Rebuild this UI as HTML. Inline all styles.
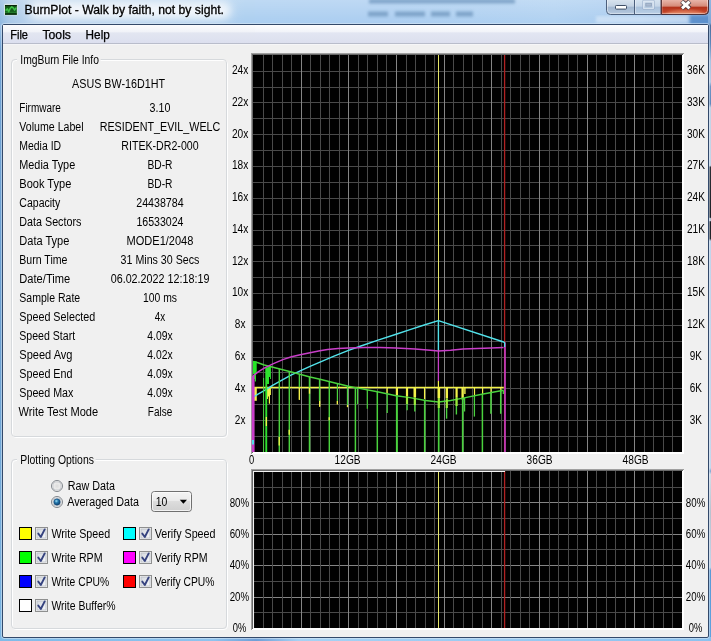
<!DOCTYPE html>
<html><head><meta charset="utf-8"><title>BurnPlot</title>
<style>html,body{margin:0;padding:0;background:#f0f0f0;overflow:hidden}body{width:711px;height:641px;font-family:"Liberation Sans",sans-serif}svg text{font-family:"Liberation Sans",sans-serif}</style></head>
<body>
<svg width="711" height="641" viewBox="0 0 711 641" font-family='"Liberation Sans", sans-serif' style="display:block;will-change:transform;opacity:0.999">
<defs>
<linearGradient id="tb" x1="0" y1="0" x2="1" y2="0">
 <stop offset="0" stop-color="#8fb8e0"/><stop offset="0.012" stop-color="#a6c6e6"/>
 <stop offset="0.04" stop-color="#b6d0ec"/><stop offset="0.30" stop-color="#b3d1ef"/>
 <stop offset="0.345" stop-color="#a9cdf0"/>
 <stop offset="0.55" stop-color="#a9ccf0"/><stop offset="0.78" stop-color="#aed0f1"/><stop offset="0.9" stop-color="#a6c9ee"/>
 <stop offset="1" stop-color="#8fb6e2"/>
</linearGradient>
<linearGradient id="tbv" x1="0" y1="0" x2="0" y2="1">
 <stop offset="0" stop-color="#ffffff" stop-opacity="0.25"/><stop offset="1" stop-color="#ffffff" stop-opacity="0"/>
</linearGradient>
<linearGradient id="menu" x1="0" y1="0" x2="0" y2="1">
 <stop offset="0" stop-color="#fdfdfe"/><stop offset="0.38" stop-color="#f1f3f9"/>
 <stop offset="0.42" stop-color="#e2e6f2"/><stop offset="1" stop-color="#dcdfee"/>
</linearGradient>
<linearGradient id="btnN" x1="0" y1="0" x2="0" y2="1">
 <stop offset="0" stop-color="#d8e3ee"/><stop offset="0.42" stop-color="#c3d2e3"/>
 <stop offset="0.46" stop-color="#a2b7d0"/><stop offset="1" stop-color="#b6c9df"/>
</linearGradient>
<linearGradient id="btnD" x1="0" y1="0" x2="0" y2="1">
 <stop offset="0" stop-color="#d6e3f0"/><stop offset="0.42" stop-color="#c6d6e8"/>
 <stop offset="0.46" stop-color="#aac1db"/><stop offset="1" stop-color="#b9cfe6"/>
</linearGradient>
<linearGradient id="btnC" x1="0" y1="0" x2="0" y2="1">
 <stop offset="0" stop-color="#e8b5a9"/><stop offset="0.42" stop-color="#d58a78"/>
 <stop offset="0.46" stop-color="#b2321b"/><stop offset="0.8" stop-color="#c24428"/><stop offset="1" stop-color="#d4694a"/>
</linearGradient>
<linearGradient id="combo" x1="0" y1="0" x2="0" y2="1">
 <stop offset="0" stop-color="#f4f4f4"/><stop offset="0.45" stop-color="#ebebeb"/>
 <stop offset="0.5" stop-color="#dddddd"/><stop offset="1" stop-color="#cfcfcf"/>
</linearGradient>
<linearGradient id="chk" x1="0" y1="0" x2="1" y2="1">
 <stop offset="0" stop-color="#d4d8de"/><stop offset="1" stop-color="#f7f8fa"/>
</linearGradient>
<radialGradient id="rad0" cx="0.5" cy="0.5" r="0.5">
 <stop offset="0" stop-color="#dcdcdc"/><stop offset="0.6" stop-color="#ececec"/><stop offset="1" stop-color="#f8f8f8"/>
</radialGradient>
<radialGradient id="rad1" cx="0.4" cy="0.35" r="0.7">
 <stop offset="0" stop-color="#9fe0f5"/><stop offset="0.4" stop-color="#2478ae"/><stop offset="1" stop-color="#0a3560"/>
</radialGradient>
<linearGradient id="rb" x1="0" y1="0" x2="0" y2="1">
 <stop offset="0" stop-color="#8fb6e2"/><stop offset="0.036" stop-color="#7fa9d8"/>
 <stop offset="0.04" stop-color="#4a6f9f"/><stop offset="0.068" stop-color="#5d88bb"/>
 <stop offset="0.095" stop-color="#a9c4e2"/><stop offset="0.128" stop-color="#b7cde6"/>
 <stop offset="0.135" stop-color="#6e96c6"/><stop offset="0.162" stop-color="#5f89bc"/>
 <stop offset="0.168" stop-color="#c3d3e6"/><stop offset="0.258" stop-color="#c6d4e6"/>
 <stop offset="0.261" stop-color="#2b2f36"/><stop offset="0.339" stop-color="#1d2026"/>
 <stop offset="0.341" stop-color="#b9c6d6"/><stop offset="0.344" stop-color="#b9c6d6"/>
 <stop offset="0.346" stop-color="#1d2026"/><stop offset="0.372" stop-color="#23262b"/>
 <stop offset="0.376" stop-color="#c2d4ea"/><stop offset="0.73" stop-color="#c7d8ec"/>
 <stop offset="0.735" stop-color="#7fa6d2"/><stop offset="0.74" stop-color="#d5dde8"/>
 <stop offset="0.80" stop-color="#b9c2cf"/><stop offset="0.885" stop-color="#c3d4e8"/>
 <stop offset="0.89" stop-color="#5a9ad6"/><stop offset="1" stop-color="#5fa3df"/>
</linearGradient>
<linearGradient id="lb" x1="0" y1="0" x2="0" y2="1">
 <stop offset="0" stop-color="#9dc0e4"/><stop offset="0.04" stop-color="#6fa2d4"/>
 <stop offset="0.5" stop-color="#6c9fd0"/><stop offset="1" stop-color="#79b4e2"/>
</linearGradient>
<linearGradient id="bb" x1="0" y1="0" x2="1" y2="0">
 <stop offset="0" stop-color="#7fbbe8"/><stop offset="0.3" stop-color="#8ec3ee"/>
 <stop offset="0.36" stop-color="#6f9fd6"/><stop offset="0.42" stop-color="#a6d2f4"/>
 <stop offset="1" stop-color="#8cc2ee"/>
</linearGradient>
<filter id="glow" x="-10%" y="-80%" width="120%" height="260%"><feGaussianBlur stdDeviation="4"/></filter>
<filter id="b1"><feGaussianBlur stdDeviation="1.6"/></filter>
<filter id="soft" x="-5%" y="-5%" width="110%" height="110%"><feGaussianBlur stdDeviation="0.35"/></filter>
</defs>
<rect x="0" y="0" width="711" height="641" fill="url(#tb)"/>
<rect x="0" y="0" width="711" height="25" fill="url(#tbv)"/>
<g filter="url(#b1)" fill="#7299c0" opacity="0.8"><rect x="369" y="-1" width="146" height="4.5"/><rect x="368" y="11.5" width="20" height="5"/><rect x="395" y="11.5" width="30" height="5"/><rect x="431" y="11.5" width="19" height="5"/><rect x="456" y="11.5" width="17" height="5"/></g>
<rect x="690" y="15" width="30" height="10" fill="#4f86c6" opacity="0.8" filter="url(#b1)"/>
<rect x="596" y="16" width="92" height="7" fill="#ffffff" opacity="0.35" filter="url(#b1)"/>
<rect x="29" y="2" width="202" height="17" rx="8" fill="#ffffff" opacity="0.8" filter="url(#glow)"/>
<rect x="0" y="25" width="3" height="616" fill="url(#lb)"/>
<rect x="708" y="0" width="3" height="641" fill="url(#rb)"/>
<rect x="0" y="637" width="711" height="4" fill="url(#bb)"/>
<rect x="2.5" y="24.5" width="706" height="613" rx="1.5" fill="#f0f0f0" stroke="#33496a" stroke-width="1"/>
<rect x="1.5" y="23.5" width="708" height="615" rx="2.5" fill="none" stroke="#dbe9f6" stroke-opacity="0.55" stroke-width="1"/>
<rect x="4" y="3.8" width="13.8" height="11.8" rx="0.8" fill="#d3e4e4" />
<rect x="5" y="5" width="11.8" height="9.7" fill="#155c1b"/>
<rect x="5" y="5" width="11.8" height="1.2" fill="#072408"/><rect x="5" y="13.4" width="11.8" height="1.3" fill="#072408"/>
<line x1="5" y1="12.3" x2="16.8" y2="12.3" stroke="#2f8f36" stroke-width="0.7"/>
<polyline points="5.6,10.6 7.4,8.9 8.6,11.8 10.4,8.2 11.8,6.9 13.4,8.1 14.6,10.2 16.2,7.6" fill="none" stroke="#3dc146" stroke-width="1.5" stroke-linejoin="round"/>
<text x="24.6" y="13.8" font-size="11.9" fill="#000" textLength="199.4" lengthAdjust="spacingAndGlyphs" stroke="#000" stroke-width="0.3">BurnPlot - Walk by faith, not by sight.</text>
<g>
<path d="M606.5,0 V10.5 a4,4 0 0 0 4,4 H704.5 a4,4 0 0 0 4,-4 V0 Z" fill="#b4c9e0"/>
<clipPath id="cb"><path d="M606.5,0 V10.5 a4,4 0 0 0 4,4 H704.5 a4,4 0 0 0 4,-4 V0 Z"/></clipPath>
<g clip-path="url(#cb)">
<rect x="606" y="0" width="28.5" height="15" fill="url(#btnN)"/>
<rect x="634.5" y="0" width="26.5" height="15" fill="url(#btnD)"/>
<rect x="661" y="0" width="48" height="15" fill="url(#btnC)"/>
<ellipse cx="685" cy="14.5" rx="19" ry="4.5" fill="#f2a27c" opacity="0.55" filter="url(#b1)"/>
</g>
<path d="M606.5,0 V10.5 a4,4 0 0 0 4,4 H704.5 a4,4 0 0 0 4,-4 V0" fill="none" stroke="#4c5f7c" stroke-width="1"/>
<path d="M607.5,0 V10.2 a3.2,3.2 0 0 0 3.2,3.2 H704.3 a3.2,3.2 0 0 0 3.2,-3.2 V0" fill="none" stroke="#ffffff" stroke-opacity="0.45" stroke-width="1"/>
<line x1="634.5" y1="0" x2="634.5" y2="14" stroke="#4c5f7c"/><line x1="661" y1="0" x2="661" y2="14" stroke="#5c4a56"/>
<line x1="635.5" y1="0" x2="635.5" y2="13" stroke="#fff" stroke-opacity="0.4"/><line x1="662" y1="0" x2="662" y2="13" stroke="#fff" stroke-opacity="0.35"/>
<rect x="615.5" y="5.5" width="11" height="3.6" rx="0.8" fill="#ffffff" stroke="#3f4f66" stroke-width="1"/>
<rect x="643.5" y="1" width="10" height="7.5" rx="0.8" fill="none" stroke="#dfe9f4" stroke-width="1.6" opacity="0.9"/>
<rect x="645.8" y="3.3" width="5.6" height="2.8" fill="#a9b9cf" stroke="#8fa2bc" stroke-width="0.9" opacity="0.95"/>
<rect x="642.6" y="0.2" width="11.8" height="9.2" rx="1" fill="none" stroke="#8fa6c3" stroke-width="0.7" opacity="0.8"/>
<path d="M661.5,0 V14 M661.5,14.5 H704.5 a4,4 0 0 0 4,-4 V0" fill="none" stroke="#4a2428" stroke-width="1" stroke-opacity="0.8"/>
<path d="M681.7,1.3 L689.8,8.6 M689.8,1.3 L681.7,8.6" fill="none" stroke="#45373f" stroke-width="4.7" stroke-opacity="0.9"/>
<path d="M682,1.6 L689.5,8.3 M689.5,1.6 L682,8.3" fill="none" stroke="#ffffff" stroke-width="2.9"/>
</g>
<rect x="3" y="25" width="705" height="18.5" fill="url(#menu)"/>
<rect x="3" y="43" width="705" height="1" fill="#b9bdcb"/>
<rect x="3" y="44" width="705" height="1" fill="#f6f6f8"/>
<text x="10.2" y="38.6" font-size="11.9" fill="#000" textLength="17.8" lengthAdjust="spacingAndGlyphs" stroke="#000" stroke-width="0.25">File</text>
<text x="42.4" y="38.6" font-size="11.9" fill="#000" textLength="28.6" lengthAdjust="spacingAndGlyphs" stroke="#000" stroke-width="0.25">Tools</text>
<text x="85.6" y="38.6" font-size="11.9" fill="#000" textLength="24.2" lengthAdjust="spacingAndGlyphs" stroke="#000" stroke-width="0.25">Help</text>
<rect x="12.5" y="60.5" width="215" height="377" rx="3.5" fill="none" stroke="#ffffff" stroke-width="1"/>
<rect x="11.5" y="59.5" width="215" height="377" rx="3.5" fill="none" stroke="#d6d9dc" stroke-width="1"/>
<rect x="17" y="52" width="83.6" height="14" fill="#f0f0f0"/>
<text x="20.3" y="63.9" font-size="12.5" fill="#000" textLength="78.6" lengthAdjust="spacingAndGlyphs">ImgBurn File Info</text>
<rect x="12.5" y="460.5" width="215" height="169" rx="3.5" fill="none" stroke="#ffffff" stroke-width="1"/>
<rect x="11.5" y="459.5" width="215" height="169" rx="3.5" fill="none" stroke="#d6d9dc" stroke-width="1"/>
<rect x="17" y="452" width="78.6" height="14" fill="#f0f0f0"/>
<text x="20.3" y="463.9" font-size="12.5" fill="#000" textLength="73.6" lengthAdjust="spacingAndGlyphs">Plotting Options</text>
<text x="72.1" y="87.6" font-size="12.5" fill="#000" textLength="92.9" lengthAdjust="spacingAndGlyphs">ASUS BW-16D1HT</text>
<text x="19.3" y="112.0" font-size="12.5" fill="#000" textLength="41.5" lengthAdjust="spacingAndGlyphs">Firmware</text>
<text x="149.6" y="112.0" font-size="12.5" fill="#000" textLength="20.8" lengthAdjust="spacingAndGlyphs">3.10</text>
<text x="19.3" y="131.0" font-size="12.5" fill="#000" textLength="64.3" lengthAdjust="spacingAndGlyphs">Volume Label</text>
<text x="99.7" y="131.0" font-size="12.5" fill="#000" textLength="120.6" lengthAdjust="spacingAndGlyphs">RESIDENT_EVIL_WELC</text>
<text x="19.3" y="150.0" font-size="12.5" fill="#000" textLength="41.8" lengthAdjust="spacingAndGlyphs">Media ID</text>
<text x="121.3" y="150.0" font-size="12.5" fill="#000" textLength="77.3" lengthAdjust="spacingAndGlyphs">RITEK-DR2-000</text>
<text x="19.3" y="169.0" font-size="12.5" fill="#000" textLength="55.9" lengthAdjust="spacingAndGlyphs">Media Type</text>
<text x="147.4" y="169.0" font-size="12.5" fill="#000" textLength="25.1" lengthAdjust="spacingAndGlyphs">BD-R</text>
<text x="19.3" y="188.0" font-size="12.5" fill="#000" textLength="52.0" lengthAdjust="spacingAndGlyphs">Book Type</text>
<text x="147.4" y="188.0" font-size="12.5" fill="#000" textLength="25.1" lengthAdjust="spacingAndGlyphs">BD-R</text>
<text x="19.3" y="207.0" font-size="12.5" fill="#000" textLength="41.0" lengthAdjust="spacingAndGlyphs">Capacity</text>
<text x="136.2" y="207.0" font-size="12.5" fill="#000" textLength="47.5" lengthAdjust="spacingAndGlyphs">24438784</text>
<text x="19.3" y="226.0" font-size="12.5" fill="#000" textLength="62.1" lengthAdjust="spacingAndGlyphs">Data Sectors</text>
<text x="136.4" y="226.0" font-size="12.5" fill="#000" textLength="47.1" lengthAdjust="spacingAndGlyphs">16533024</text>
<text x="19.3" y="245.0" font-size="12.5" fill="#000" textLength="50.1" lengthAdjust="spacingAndGlyphs">Data Type</text>
<text x="126.5" y="245.0" font-size="12.5" fill="#000" textLength="66.9" lengthAdjust="spacingAndGlyphs">MODE1/2048</text>
<text x="19.3" y="264.0" font-size="12.5" fill="#000" textLength="48.1" lengthAdjust="spacingAndGlyphs">Burn Time</text>
<text x="120.6" y="264.0" font-size="12.5" fill="#000" textLength="78.8" lengthAdjust="spacingAndGlyphs">31 Mins 30 Secs</text>
<text x="19.3" y="283.0" font-size="12.5" fill="#000" textLength="50.9" lengthAdjust="spacingAndGlyphs">Date/Time</text>
<text x="110.7" y="283.0" font-size="12.5" fill="#000" textLength="98.7" lengthAdjust="spacingAndGlyphs">06.02.2022 12:18:19</text>
<text x="19.3" y="302.0" font-size="12.5" fill="#000" textLength="60.9" lengthAdjust="spacingAndGlyphs">Sample Rate</text>
<text x="143.0" y="302.0" font-size="12.5" fill="#000" textLength="34.0" lengthAdjust="spacingAndGlyphs">100 ms</text>
<text x="19.3" y="321.0" font-size="12.5" fill="#000" textLength="75.9" lengthAdjust="spacingAndGlyphs">Speed Selected</text>
<text x="154.8" y="321.0" font-size="12.5" fill="#000" textLength="10.4" lengthAdjust="spacingAndGlyphs">4x</text>
<text x="19.3" y="340.0" font-size="12.5" fill="#000" textLength="55.8" lengthAdjust="spacingAndGlyphs">Speed Start</text>
<text x="147.3" y="340.0" font-size="12.5" fill="#000" textLength="25.3" lengthAdjust="spacingAndGlyphs">4.09x</text>
<text x="19.3" y="359.0" font-size="12.5" fill="#000" textLength="53.2" lengthAdjust="spacingAndGlyphs">Speed Avg</text>
<text x="147.3" y="359.0" font-size="12.5" fill="#000" textLength="25.3" lengthAdjust="spacingAndGlyphs">4.02x</text>
<text x="19.3" y="378.0" font-size="12.5" fill="#000" textLength="53.2" lengthAdjust="spacingAndGlyphs">Speed End</text>
<text x="147.3" y="378.0" font-size="12.5" fill="#000" textLength="25.3" lengthAdjust="spacingAndGlyphs">4.09x</text>
<text x="19.3" y="397.0" font-size="12.5" fill="#000" textLength="54.1" lengthAdjust="spacingAndGlyphs">Speed Max</text>
<text x="147.3" y="397.0" font-size="12.5" fill="#000" textLength="25.3" lengthAdjust="spacingAndGlyphs">4.09x</text>
<text x="18.6" y="416.0" font-size="12.5" fill="#000" textLength="79.5" lengthAdjust="spacingAndGlyphs">Write Test Mode</text>
<text x="147.8" y="416.0" font-size="12.5" fill="#000" textLength="24.4" lengthAdjust="spacingAndGlyphs">False</text>
<circle cx="57" cy="486" r="5.5" fill="url(#rad0)" stroke="#80858b" stroke-width="1"/>
<circle cx="57" cy="486" r="4.1" fill="none" stroke="#c6c9cd" stroke-width="1"/>
<circle cx="57" cy="502" r="5.5" fill="url(#rad0)" stroke="#80858b" stroke-width="1"/>
<circle cx="57" cy="502" r="4.1" fill="none" stroke="#c6c9cd" stroke-width="1"/>
<circle cx="57" cy="502" r="3.2" fill="url(#rad1)" stroke="#1b4f7d" stroke-width="0.6"/>
<text x="67.7" y="489.8" font-size="12.5" fill="#000" textLength="47.3" lengthAdjust="spacingAndGlyphs">Raw Data</text>
<text x="67.2" y="505.8" font-size="12.5" fill="#000" textLength="71.8" lengthAdjust="spacingAndGlyphs">Averaged Data</text>
<rect x="151.5" y="491.5" width="40" height="20" rx="3" fill="url(#combo)" stroke="#707070"/>
<rect x="152.5" y="492.5" width="38" height="18" rx="2" fill="none" stroke="#fbfbfb" stroke-opacity="0.8"/>
<text x="155.8" y="505.5" font-size="12.5" fill="#000" textLength="11.6" lengthAdjust="spacingAndGlyphs">10</text>
<path d="M179.8,499.8 h7.2 l-3.6,4 z" fill="#000"/>
<rect x="19.5" y="527.5" width="12" height="12" fill="#ffff00" stroke="#000" stroke-width="1"/>
<rect x="35.5" y="527.5" width="12" height="12" fill="#f4f4f4" stroke="#8e8f8f" stroke-width="1"/>
<rect x="37" y="529" width="9" height="9" fill="url(#chk)" stroke="#b9bec6" stroke-width="0.8"/>
<path d="M38.3,533.6 l2.5,3.4 l3.9,-7.6" fill="none" stroke="#36437f" stroke-width="1.9" stroke-linecap="round" stroke-linejoin="round"/>
<text x="51.4" y="537.7" font-size="12.5" fill="#000" textLength="58.7" lengthAdjust="spacingAndGlyphs">Write Speed</text>
<rect x="19.5" y="551.5" width="12" height="12" fill="#00ff00" stroke="#000" stroke-width="1"/>
<rect x="35.5" y="551.5" width="12" height="12" fill="#f4f4f4" stroke="#8e8f8f" stroke-width="1"/>
<rect x="37" y="553" width="9" height="9" fill="url(#chk)" stroke="#b9bec6" stroke-width="0.8"/>
<path d="M38.3,557.6 l2.5,3.4 l3.9,-7.6" fill="none" stroke="#36437f" stroke-width="1.9" stroke-linecap="round" stroke-linejoin="round"/>
<text x="51.4" y="561.7" font-size="12.5" fill="#000" textLength="51.1" lengthAdjust="spacingAndGlyphs">Write RPM</text>
<rect x="19.5" y="575.5" width="12" height="12" fill="#0000ff" stroke="#000" stroke-width="1"/>
<rect x="35.5" y="575.5" width="12" height="12" fill="#f4f4f4" stroke="#8e8f8f" stroke-width="1"/>
<rect x="37" y="577" width="9" height="9" fill="url(#chk)" stroke="#b9bec6" stroke-width="0.8"/>
<path d="M38.3,581.6 l2.5,3.4 l3.9,-7.6" fill="none" stroke="#36437f" stroke-width="1.9" stroke-linecap="round" stroke-linejoin="round"/>
<text x="51.4" y="585.7" font-size="12.5" fill="#000" textLength="57.8" lengthAdjust="spacingAndGlyphs">Write CPU%</text>
<rect x="19.5" y="599.5" width="12" height="12" fill="#ffffff" stroke="#000" stroke-width="1"/>
<rect x="35.5" y="599.5" width="12" height="12" fill="#f4f4f4" stroke="#8e8f8f" stroke-width="1"/>
<rect x="37" y="601" width="9" height="9" fill="url(#chk)" stroke="#b9bec6" stroke-width="0.8"/>
<path d="M38.3,605.6 l2.5,3.4 l3.9,-7.6" fill="none" stroke="#36437f" stroke-width="1.9" stroke-linecap="round" stroke-linejoin="round"/>
<text x="51.4" y="609.7" font-size="12.5" fill="#000" textLength="64.1" lengthAdjust="spacingAndGlyphs">Write Buffer%</text>
<rect x="123.5" y="527.5" width="12" height="12" fill="#00ffff" stroke="#000" stroke-width="1"/>
<rect x="139.5" y="527.5" width="12" height="12" fill="#f4f4f4" stroke="#8e8f8f" stroke-width="1"/>
<rect x="141" y="529" width="9" height="9" fill="url(#chk)" stroke="#b9bec6" stroke-width="0.8"/>
<path d="M142.3,533.6 l2.5,3.4 l3.9,-7.6" fill="none" stroke="#36437f" stroke-width="1.9" stroke-linecap="round" stroke-linejoin="round"/>
<text x="154.7" y="537.7" font-size="12.5" fill="#000" textLength="60.8" lengthAdjust="spacingAndGlyphs">Verify Speed</text>
<rect x="123.5" y="551.5" width="12" height="12" fill="#ff00ff" stroke="#000" stroke-width="1"/>
<rect x="139.5" y="551.5" width="12" height="12" fill="#f4f4f4" stroke="#8e8f8f" stroke-width="1"/>
<rect x="141" y="553" width="9" height="9" fill="url(#chk)" stroke="#b9bec6" stroke-width="0.8"/>
<path d="M142.3,557.6 l2.5,3.4 l3.9,-7.6" fill="none" stroke="#36437f" stroke-width="1.9" stroke-linecap="round" stroke-linejoin="round"/>
<text x="154.7" y="561.7" font-size="12.5" fill="#000" textLength="52.9" lengthAdjust="spacingAndGlyphs">Verify RPM</text>
<rect x="123.5" y="575.5" width="12" height="12" fill="#ff0000" stroke="#000" stroke-width="1"/>
<rect x="139.5" y="575.5" width="12" height="12" fill="#f4f4f4" stroke="#8e8f8f" stroke-width="1"/>
<rect x="141" y="577" width="9" height="9" fill="url(#chk)" stroke="#b9bec6" stroke-width="0.8"/>
<path d="M142.3,581.6 l2.5,3.4 l3.9,-7.6" fill="none" stroke="#36437f" stroke-width="1.9" stroke-linecap="round" stroke-linejoin="round"/>
<text x="154.7" y="585.7" font-size="12.5" fill="#000" textLength="59.8" lengthAdjust="spacingAndGlyphs">Verify CPU%</text>
<rect x="251" y="53" width="433" height="401" fill="#ffffff"/>
<path d="M251,454 V53 H684 V54 H252 V454 Z" fill="#a0a0a0"/>
<path d="M252,453 V54 H683 V55 H253 V453 Z" fill="#696969"/>
<rect x="253" y="55" width="429" height="397" fill="#000"/>
<rect x="251" y="469" width="433" height="161" fill="#ffffff"/>
<path d="M251,630 V469 H684 V470 H252 V630 Z" fill="#a0a0a0"/>
<path d="M252,629 V470 H683 V471 H253 V629 Z" fill="#696969"/>
<rect x="253" y="471" width="429" height="157" fill="#000"/>
<clipPath id="ct"><rect x="253" y="55" width="429" height="397"/></clipPath>
<clipPath id="cbm"><rect x="253" y="471" width="429" height="157"/></clipPath>
<g clip-path="url(#ct)">
<line x1="253" y1="436.50" x2="682" y2="436.50" stroke="#4a4a4a" stroke-width="1"/>
<line x1="253" y1="420.50" x2="682" y2="420.50" stroke="#4a4a4a" stroke-width="1"/>
<line x1="253" y1="404.50" x2="682" y2="404.50" stroke="#4a4a4a" stroke-width="1"/>
<line x1="253" y1="388.50" x2="682" y2="388.50" stroke="#4a4a4a" stroke-width="1"/>
<line x1="253" y1="372.50" x2="682" y2="372.50" stroke="#4a4a4a" stroke-width="1"/>
<line x1="253" y1="357.50" x2="682" y2="357.50" stroke="#4a4a4a" stroke-width="1"/>
<line x1="253" y1="341.50" x2="682" y2="341.50" stroke="#4a4a4a" stroke-width="1"/>
<line x1="253" y1="325.50" x2="682" y2="325.50" stroke="#4a4a4a" stroke-width="1"/>
<line x1="253" y1="309.50" x2="682" y2="309.50" stroke="#4a4a4a" stroke-width="1"/>
<line x1="253" y1="293.50" x2="682" y2="293.50" stroke="#4a4a4a" stroke-width="1"/>
<line x1="253" y1="277.50" x2="682" y2="277.50" stroke="#4a4a4a" stroke-width="1"/>
<line x1="253" y1="261.50" x2="682" y2="261.50" stroke="#4a4a4a" stroke-width="1"/>
<line x1="253" y1="245.50" x2="682" y2="245.50" stroke="#4a4a4a" stroke-width="1"/>
<line x1="253" y1="230.50" x2="682" y2="230.50" stroke="#4a4a4a" stroke-width="1"/>
<line x1="253" y1="214.50" x2="682" y2="214.50" stroke="#4a4a4a" stroke-width="1"/>
<line x1="253" y1="198.50" x2="682" y2="198.50" stroke="#4a4a4a" stroke-width="1"/>
<line x1="253" y1="182.50" x2="682" y2="182.50" stroke="#4a4a4a" stroke-width="1"/>
<line x1="253" y1="166.50" x2="682" y2="166.50" stroke="#4a4a4a" stroke-width="1"/>
<line x1="253" y1="150.50" x2="682" y2="150.50" stroke="#4a4a4a" stroke-width="1"/>
<line x1="253" y1="134.50" x2="682" y2="134.50" stroke="#4a4a4a" stroke-width="1"/>
<line x1="253" y1="118.50" x2="682" y2="118.50" stroke="#4a4a4a" stroke-width="1"/>
<line x1="253" y1="102.50" x2="682" y2="102.50" stroke="#4a4a4a" stroke-width="1"/>
<line x1="253" y1="87.50" x2="682" y2="87.50" stroke="#4a4a4a" stroke-width="1"/>
<line x1="253" y1="71.50" x2="682" y2="71.50" stroke="#4a4a4a" stroke-width="1"/>
<line x1="263.50" y1="55" x2="263.50" y2="452" stroke="#4a4a4a" stroke-width="1"/>
<line x1="272.50" y1="55" x2="272.50" y2="452" stroke="#4a4a4a" stroke-width="1"/>
<line x1="282.50" y1="55" x2="282.50" y2="452" stroke="#4a4a4a" stroke-width="1"/>
<line x1="291.50" y1="55" x2="291.50" y2="452" stroke="#4a4a4a" stroke-width="1"/>
<line x1="301.50" y1="55" x2="301.50" y2="452" stroke="#858585" stroke-width="1"/>
<line x1="310.50" y1="55" x2="310.50" y2="452" stroke="#4a4a4a" stroke-width="1"/>
<line x1="320.50" y1="55" x2="320.50" y2="452" stroke="#4a4a4a" stroke-width="1"/>
<line x1="329.50" y1="55" x2="329.50" y2="452" stroke="#4a4a4a" stroke-width="1"/>
<line x1="339.50" y1="55" x2="339.50" y2="452" stroke="#4a4a4a" stroke-width="1"/>
<line x1="348.50" y1="55" x2="348.50" y2="452" stroke="#858585" stroke-width="1"/>
<line x1="358.50" y1="55" x2="358.50" y2="452" stroke="#4a4a4a" stroke-width="1"/>
<line x1="367.50" y1="55" x2="367.50" y2="452" stroke="#4a4a4a" stroke-width="1"/>
<line x1="377.50" y1="55" x2="377.50" y2="452" stroke="#4a4a4a" stroke-width="1"/>
<line x1="386.50" y1="55" x2="386.50" y2="452" stroke="#4a4a4a" stroke-width="1"/>
<line x1="396.50" y1="55" x2="396.50" y2="452" stroke="#858585" stroke-width="1"/>
<line x1="406.50" y1="55" x2="406.50" y2="452" stroke="#4a4a4a" stroke-width="1"/>
<line x1="415.50" y1="55" x2="415.50" y2="452" stroke="#4a4a4a" stroke-width="1"/>
<line x1="425.50" y1="55" x2="425.50" y2="452" stroke="#4a4a4a" stroke-width="1"/>
<line x1="434.50" y1="55" x2="434.50" y2="452" stroke="#4a4a4a" stroke-width="1"/>
<line x1="444.50" y1="55" x2="444.50" y2="452" stroke="#858585" stroke-width="1"/>
<line x1="453.50" y1="55" x2="453.50" y2="452" stroke="#4a4a4a" stroke-width="1"/>
<line x1="463.50" y1="55" x2="463.50" y2="452" stroke="#4a4a4a" stroke-width="1"/>
<line x1="472.50" y1="55" x2="472.50" y2="452" stroke="#4a4a4a" stroke-width="1"/>
<line x1="482.50" y1="55" x2="482.50" y2="452" stroke="#4a4a4a" stroke-width="1"/>
<line x1="491.50" y1="55" x2="491.50" y2="452" stroke="#858585" stroke-width="1"/>
<line x1="501.50" y1="55" x2="501.50" y2="452" stroke="#4a4a4a" stroke-width="1"/>
<line x1="510.50" y1="55" x2="510.50" y2="452" stroke="#4a4a4a" stroke-width="1"/>
<line x1="520.50" y1="55" x2="520.50" y2="452" stroke="#4a4a4a" stroke-width="1"/>
<line x1="529.50" y1="55" x2="529.50" y2="452" stroke="#4a4a4a" stroke-width="1"/>
<line x1="539.50" y1="55" x2="539.50" y2="452" stroke="#858585" stroke-width="1"/>
<line x1="549.50" y1="55" x2="549.50" y2="452" stroke="#4a4a4a" stroke-width="1"/>
<line x1="558.50" y1="55" x2="558.50" y2="452" stroke="#4a4a4a" stroke-width="1"/>
<line x1="568.50" y1="55" x2="568.50" y2="452" stroke="#4a4a4a" stroke-width="1"/>
<line x1="577.50" y1="55" x2="577.50" y2="452" stroke="#4a4a4a" stroke-width="1"/>
<line x1="587.50" y1="55" x2="587.50" y2="452" stroke="#858585" stroke-width="1"/>
<line x1="596.50" y1="55" x2="596.50" y2="452" stroke="#4a4a4a" stroke-width="1"/>
<line x1="606.50" y1="55" x2="606.50" y2="452" stroke="#4a4a4a" stroke-width="1"/>
<line x1="615.50" y1="55" x2="615.50" y2="452" stroke="#4a4a4a" stroke-width="1"/>
<line x1="625.50" y1="55" x2="625.50" y2="452" stroke="#4a4a4a" stroke-width="1"/>
<line x1="634.50" y1="55" x2="634.50" y2="452" stroke="#858585" stroke-width="1"/>
<line x1="644.50" y1="55" x2="644.50" y2="452" stroke="#4a4a4a" stroke-width="1"/>
<line x1="653.50" y1="55" x2="653.50" y2="452" stroke="#4a4a4a" stroke-width="1"/>
<line x1="663.50" y1="55" x2="663.50" y2="452" stroke="#4a4a4a" stroke-width="1"/>
<line x1="672.50" y1="55" x2="672.50" y2="452" stroke="#4a4a4a" stroke-width="1"/>
<line x1="438.5" y1="55" x2="438.5" y2="452" stroke="#e6e668" stroke-width="1"/>
<line x1="504.6" y1="55" x2="504.6" y2="452" stroke="#b02222" stroke-width="1.3"/>
<g stroke="#f2f24a" fill="#f2f24a">
<line x1="254" y1="387.5" x2="503.8" y2="387.5" stroke-width="1.45"/>
<path d="M253.8,387.5 V400.8 H256.8 V387.5 Z" stroke="none"/>
<path d="M266.2,387.5 V399 H268 V396.5 H269 V403.6 H270 V395 H270.9 V387.5 Z" stroke="none"/>
<line x1="299.4" y1="387.5" x2="299.4" y2="399.7" stroke-width="1.2"/>
<line x1="309.5" y1="387.5" x2="309.5" y2="393.7" stroke-width="1.2"/>
<line x1="319.7" y1="387.5" x2="319.7" y2="406.6" stroke-width="1.2"/>
<line x1="266.4" y1="417" x2="266.4" y2="426" stroke-width="1.2"/>
<line x1="289.3" y1="429.8" x2="289.3" y2="434.7" stroke-width="1.2"/>
<line x1="279.3" y1="436.9" x2="279.3" y2="445.6" stroke-width="1.2"/>
<line x1="329.3" y1="417.3" x2="329.3" y2="420.3" stroke-width="1.2"/>
<line x1="337.4" y1="401" x2="337.4" y2="404.2" stroke-width="1.2"/>
<line x1="347.5" y1="405" x2="347.5" y2="407" stroke-width="1.2"/>
<line x1="387.1" y1="387.5" x2="387.1" y2="393.3" stroke-width="1.4"/>
<line x1="396.9" y1="387.5" x2="396.9" y2="395.7" stroke-width="2.2"/>
<line x1="407" y1="387.5" x2="407" y2="396.4" stroke-width="2.2"/>
<line x1="414.8" y1="387.5" x2="414.8" y2="397.2" stroke-width="2.6"/>
<line x1="424.6" y1="387.5" x2="424.6" y2="399.2" stroke-width="1.3"/>
<line x1="438.8" y1="387.5" x2="438.8" y2="398" stroke-width="2.6"/>
<line x1="446.8" y1="387.5" x2="446.8" y2="398.3" stroke-width="2.4"/>
<line x1="456.6" y1="387.5" x2="456.6" y2="397" stroke-width="2.2"/>
<line x1="462.6" y1="387.5" x2="462.6" y2="399.5" stroke-width="2.3"/>
<line x1="464.9" y1="387.5" x2="464.9" y2="394" stroke-width="1.4"/>
<line x1="474.5" y1="387.5" x2="474.5" y2="395.5" stroke-width="1.2"/>
<line x1="482.6" y1="387.5" x2="482.6" y2="394" stroke-width="1.2"/>
<line x1="491" y1="387.5" x2="491" y2="393.4" stroke-width="1.2"/>
<line x1="500.8" y1="387.5" x2="500.8" y2="391.3" stroke-width="1.2"/>
<line x1="438.4" y1="381" x2="438.4" y2="388" stroke-width="1.2"/>
</g>
<polyline points="253.3,397.2 258,394.2 264.2,390.6 273,385.1 282.8,379.7 291.5,374.9 300.2,370.8 310,366.4 320,362.2 334,356.2 348.5,350.4 360.2,346.3 378,340.1 396.1,334.2 410,329.6 425,324.8 438.4,320.6 504.4,342.2" fill="none" stroke="#52e2ea" stroke-width="1.45" stroke-linejoin="round"/>
<line x1="438.4" y1="320.6" x2="438.4" y2="350.5" stroke="#52e2ea" stroke-width="1.4"/>
<g stroke="#4ad23e" fill="#4ad23e">
<polyline points="252.7,361.5 258,362.8 264.2,365 273,367.2 291.5,372 310,377 320,379.3 334,382.8 348.5,386.3 355.5,387.6 377.4,391.8 396.1,395.7 410,397.6 425.6,400.5 438.4,402 450.6,400.5 463,398.1 481.8,394.2 503.6,390.3" fill="none" stroke-width="1.45" stroke-linejoin="round"/>
<path d="M252.9,361.2 H256.7 V374 H256 V381.5 H254.8 V379 H254 V374 H252.9 Z" stroke="none" fill="#25e425"/>
<path d="M265.3,367.8 L270.9,366.6 V379 H270 V377 H269 V384 H267.2 V452 H265.3 Z" stroke="none" fill="#2fe02f"/>
<line x1="263.6" y1="378.0" x2="263.6" y2="452" stroke-width="1.0"/>
<line x1="279.3" y1="368.8" x2="279.3" y2="452" stroke-width="1.4"/>
<line x1="289.3" y1="371.4" x2="289.3" y2="452" stroke-width="1.4"/>
<line x1="299.4" y1="374.1" x2="299.4" y2="387.5" stroke-width="1.4"/>
<line x1="309.5" y1="376.9" x2="309.5" y2="452" stroke-width="1.5"/>
<line x1="319.5" y1="379.2" x2="319.5" y2="401.1" stroke-width="1.3"/>
<line x1="329.3" y1="381.6" x2="329.3" y2="452" stroke-width="1.4"/>
<line x1="337.4" y1="383.6" x2="337.4" y2="401" stroke-width="1.2"/>
<line x1="347.5" y1="386.1" x2="347.5" y2="405.2" stroke-width="1.3"/>
<line x1="355.4" y1="387.6" x2="355.4" y2="452" stroke-width="1.5"/>
<line x1="357.5" y1="388.0" x2="357.5" y2="404" stroke-width="1.1"/>
<line x1="367.3" y1="389.9" x2="367.3" y2="408.8" stroke-width="1.2"/>
<line x1="377.3" y1="391.8" x2="377.3" y2="452" stroke-width="1.5"/>
<line x1="387.2" y1="393.8" x2="387.2" y2="413" stroke-width="1.3"/>
<line x1="396.9" y1="395.8" x2="396.9" y2="452" stroke-width="2.0"/>
<line x1="407.1" y1="397.2" x2="407.1" y2="410.2" stroke-width="1.4"/>
<line x1="414.8" y1="398.5" x2="414.8" y2="411.6" stroke-width="1.4"/>
<line x1="424.7" y1="400.3" x2="424.7" y2="452" stroke-width="1.6"/>
<line x1="438.7" y1="402.0" x2="438.7" y2="452" stroke-width="1.7"/>
<line x1="446.6" y1="401.0" x2="446.6" y2="418.7" stroke-width="1.4"/>
<line x1="456.4" y1="399.4" x2="456.4" y2="414.5" stroke-width="1.4"/>
<line x1="462.7" y1="398.2" x2="462.7" y2="452" stroke-width="1.7"/>
<line x1="464.6" y1="397.8" x2="464.6" y2="411.6" stroke-width="1.2"/>
<line x1="474.4" y1="395.7" x2="474.4" y2="416.6" stroke-width="1.3"/>
<line x1="482.4" y1="394.1" x2="482.4" y2="452" stroke-width="1.5"/>
<line x1="490.9" y1="392.6" x2="490.9" y2="413.8" stroke-width="1.5"/>
<line x1="500.7" y1="390.8" x2="500.7" y2="413.8" stroke-width="1.5"/>
<line x1="503.3" y1="390.4" x2="503.3" y2="394" stroke-width="1.3"/>
</g>
<line x1="438.8" y1="398" x2="438.8" y2="408" stroke="#9be83a" stroke-width="2.2"/>
<line x1="446.8" y1="398.3" x2="446.8" y2="408" stroke="#9be83a" stroke-width="2.2"/>
<line x1="456.6" y1="397" x2="456.6" y2="406" stroke="#9be83a" stroke-width="2.2"/>
<line x1="407" y1="396.4" x2="407" y2="404" stroke="#9be83a" stroke-width="2.2"/>
<line x1="414.8" y1="397.2" x2="414.8" y2="405" stroke="#9be83a" stroke-width="2.2"/>
<g stroke="#f2f24a">
<line x1="266.4" y1="417" x2="266.4" y2="426" stroke-width="1.2"/>
<line x1="289.3" y1="429.8" x2="289.3" y2="434.7" stroke-width="1.2"/>
<line x1="279.3" y1="436.9" x2="279.3" y2="445.6" stroke-width="1.2"/>
<line x1="329.3" y1="417.3" x2="329.3" y2="420.3" stroke-width="1.2"/>
<line x1="319.6" y1="401.1" x2="319.6" y2="406.7" stroke-width="1.2"/>
<line x1="337.4" y1="401" x2="337.4" y2="404.2" stroke-width="1.2"/>
<line x1="347.5" y1="405.2" x2="347.5" y2="407.2" stroke-width="1.2"/>
<line x1="269.4" y1="396" x2="269.4" y2="403.6" stroke-width="1.2"/>
<line x1="309.5" y1="387.5" x2="309.5" y2="393.7" stroke-width="1.2"/>
<line x1="299.4" y1="387.5" x2="299.4" y2="399.7" stroke-width="1.2"/>
</g>
<polyline points="253.4,452 253.4,375.5 254.4,374.8 258.5,371.6 264.2,368.2 272.9,363.9 282.8,359.6 291.5,356.8 300.2,354.8 310,352.7 319.9,350.8 327.5,349.4 338,348.5 348.5,348.0 365,347.4 380,347.6 396,348.1 415,348.9 430.3,350.2 438.4,350.9 450.6,350.2 463,349.1 477,348.4 491,347.9 503.6,347.4" fill="none" stroke="#c93fc9" stroke-width="1.5" stroke-linejoin="round"/>
<line x1="253.3" y1="376" x2="253.3" y2="452" stroke="#c93fc9" stroke-width="2.2"/>
<line x1="438.4" y1="351" x2="438.4" y2="381" stroke="#c93fc9" stroke-width="1.3"/>
<line x1="505" y1="342.5" x2="505" y2="452" stroke="#c93fc9" stroke-width="1.6"/>
<line x1="504.6" y1="342" x2="504.6" y2="347" stroke="#52e2ea" stroke-width="1.2"/>
</g>
<line x1="253.0" y1="376" x2="253.0" y2="452" stroke="#c93fc9" stroke-width="2.4"/>
<line x1="253.0" y1="440" x2="253.0" y2="444.5" stroke="#52e2ea" stroke-width="2.0"/>
<g clip-path="url(#cbm)">
<line x1="253" y1="612.50" x2="682" y2="612.50" stroke="#4a4a4a" stroke-width="1"/>
<line x1="253" y1="597.50" x2="682" y2="597.50" stroke="#858585" stroke-width="1"/>
<line x1="253" y1="581.50" x2="682" y2="581.50" stroke="#4a4a4a" stroke-width="1"/>
<line x1="253" y1="565.50" x2="682" y2="565.50" stroke="#858585" stroke-width="1"/>
<line x1="253" y1="549.50" x2="682" y2="549.50" stroke="#4a4a4a" stroke-width="1"/>
<line x1="253" y1="534.50" x2="682" y2="534.50" stroke="#858585" stroke-width="1"/>
<line x1="253" y1="518.50" x2="682" y2="518.50" stroke="#4a4a4a" stroke-width="1"/>
<line x1="253" y1="502.50" x2="682" y2="502.50" stroke="#858585" stroke-width="1"/>
<line x1="253" y1="487.50" x2="682" y2="487.50" stroke="#4a4a4a" stroke-width="1"/>
<line x1="263.50" y1="471" x2="263.50" y2="628" stroke="#4a4a4a" stroke-width="1"/>
<line x1="272.50" y1="471" x2="272.50" y2="628" stroke="#4a4a4a" stroke-width="1"/>
<line x1="282.50" y1="471" x2="282.50" y2="628" stroke="#4a4a4a" stroke-width="1"/>
<line x1="291.50" y1="471" x2="291.50" y2="628" stroke="#4a4a4a" stroke-width="1"/>
<line x1="301.50" y1="471" x2="301.50" y2="628" stroke="#858585" stroke-width="1"/>
<line x1="310.50" y1="471" x2="310.50" y2="628" stroke="#4a4a4a" stroke-width="1"/>
<line x1="320.50" y1="471" x2="320.50" y2="628" stroke="#4a4a4a" stroke-width="1"/>
<line x1="329.50" y1="471" x2="329.50" y2="628" stroke="#4a4a4a" stroke-width="1"/>
<line x1="339.50" y1="471" x2="339.50" y2="628" stroke="#4a4a4a" stroke-width="1"/>
<line x1="348.50" y1="471" x2="348.50" y2="628" stroke="#858585" stroke-width="1"/>
<line x1="358.50" y1="471" x2="358.50" y2="628" stroke="#4a4a4a" stroke-width="1"/>
<line x1="367.50" y1="471" x2="367.50" y2="628" stroke="#4a4a4a" stroke-width="1"/>
<line x1="377.50" y1="471" x2="377.50" y2="628" stroke="#4a4a4a" stroke-width="1"/>
<line x1="386.50" y1="471" x2="386.50" y2="628" stroke="#4a4a4a" stroke-width="1"/>
<line x1="396.50" y1="471" x2="396.50" y2="628" stroke="#858585" stroke-width="1"/>
<line x1="406.50" y1="471" x2="406.50" y2="628" stroke="#4a4a4a" stroke-width="1"/>
<line x1="415.50" y1="471" x2="415.50" y2="628" stroke="#4a4a4a" stroke-width="1"/>
<line x1="425.50" y1="471" x2="425.50" y2="628" stroke="#4a4a4a" stroke-width="1"/>
<line x1="434.50" y1="471" x2="434.50" y2="628" stroke="#4a4a4a" stroke-width="1"/>
<line x1="444.50" y1="471" x2="444.50" y2="628" stroke="#858585" stroke-width="1"/>
<line x1="453.50" y1="471" x2="453.50" y2="628" stroke="#4a4a4a" stroke-width="1"/>
<line x1="463.50" y1="471" x2="463.50" y2="628" stroke="#4a4a4a" stroke-width="1"/>
<line x1="472.50" y1="471" x2="472.50" y2="628" stroke="#4a4a4a" stroke-width="1"/>
<line x1="482.50" y1="471" x2="482.50" y2="628" stroke="#4a4a4a" stroke-width="1"/>
<line x1="491.50" y1="471" x2="491.50" y2="628" stroke="#858585" stroke-width="1"/>
<line x1="501.50" y1="471" x2="501.50" y2="628" stroke="#4a4a4a" stroke-width="1"/>
<line x1="510.50" y1="471" x2="510.50" y2="628" stroke="#4a4a4a" stroke-width="1"/>
<line x1="520.50" y1="471" x2="520.50" y2="628" stroke="#4a4a4a" stroke-width="1"/>
<line x1="529.50" y1="471" x2="529.50" y2="628" stroke="#4a4a4a" stroke-width="1"/>
<line x1="539.50" y1="471" x2="539.50" y2="628" stroke="#858585" stroke-width="1"/>
<line x1="549.50" y1="471" x2="549.50" y2="628" stroke="#4a4a4a" stroke-width="1"/>
<line x1="558.50" y1="471" x2="558.50" y2="628" stroke="#4a4a4a" stroke-width="1"/>
<line x1="568.50" y1="471" x2="568.50" y2="628" stroke="#4a4a4a" stroke-width="1"/>
<line x1="577.50" y1="471" x2="577.50" y2="628" stroke="#4a4a4a" stroke-width="1"/>
<line x1="587.50" y1="471" x2="587.50" y2="628" stroke="#858585" stroke-width="1"/>
<line x1="596.50" y1="471" x2="596.50" y2="628" stroke="#4a4a4a" stroke-width="1"/>
<line x1="606.50" y1="471" x2="606.50" y2="628" stroke="#4a4a4a" stroke-width="1"/>
<line x1="615.50" y1="471" x2="615.50" y2="628" stroke="#4a4a4a" stroke-width="1"/>
<line x1="625.50" y1="471" x2="625.50" y2="628" stroke="#4a4a4a" stroke-width="1"/>
<line x1="634.50" y1="471" x2="634.50" y2="628" stroke="#858585" stroke-width="1"/>
<line x1="644.50" y1="471" x2="644.50" y2="628" stroke="#4a4a4a" stroke-width="1"/>
<line x1="653.50" y1="471" x2="653.50" y2="628" stroke="#4a4a4a" stroke-width="1"/>
<line x1="663.50" y1="471" x2="663.50" y2="628" stroke="#4a4a4a" stroke-width="1"/>
<line x1="672.50" y1="471" x2="672.50" y2="628" stroke="#4a4a4a" stroke-width="1"/>
<line x1="438.5" y1="471" x2="438.5" y2="628" stroke="#e6e668" stroke-width="1"/>
<line x1="504.6" y1="471" x2="504.6" y2="628" stroke="#b02222" stroke-width="1.3"/>
<path d="M253.5,628 V471.5 H505" fill="none" stroke="#f4f4f4" stroke-width="1.1"/>
</g>
<text x="234.8" y="423.5" font-size="12.5" fill="#000" textLength="10.6" lengthAdjust="spacingAndGlyphs">2x</text>
<text x="689.8" y="423.5" font-size="12.5" fill="#000" textLength="12.2" lengthAdjust="spacingAndGlyphs">3K</text>
<text x="234.8" y="391.7" font-size="12.5" fill="#000" textLength="10.6" lengthAdjust="spacingAndGlyphs">4x</text>
<text x="689.8" y="391.7" font-size="12.5" fill="#000" textLength="12.2" lengthAdjust="spacingAndGlyphs">6K</text>
<text x="234.8" y="360.0" font-size="12.5" fill="#000" textLength="10.6" lengthAdjust="spacingAndGlyphs">6x</text>
<text x="689.8" y="360.0" font-size="12.5" fill="#000" textLength="12.2" lengthAdjust="spacingAndGlyphs">9K</text>
<text x="234.8" y="328.2" font-size="12.5" fill="#000" textLength="10.6" lengthAdjust="spacingAndGlyphs">8x</text>
<text x="686.9" y="328.2" font-size="12.5" fill="#000" textLength="18.0" lengthAdjust="spacingAndGlyphs">12K</text>
<text x="231.9" y="296.4" font-size="12.5" fill="#000" textLength="16.4" lengthAdjust="spacingAndGlyphs">10x</text>
<text x="686.9" y="296.4" font-size="12.5" fill="#000" textLength="18.0" lengthAdjust="spacingAndGlyphs">15K</text>
<text x="231.9" y="264.7" font-size="12.5" fill="#000" textLength="16.4" lengthAdjust="spacingAndGlyphs">12x</text>
<text x="686.9" y="264.7" font-size="12.5" fill="#000" textLength="18.0" lengthAdjust="spacingAndGlyphs">18K</text>
<text x="231.9" y="232.9" font-size="12.5" fill="#000" textLength="16.4" lengthAdjust="spacingAndGlyphs">14x</text>
<text x="686.9" y="232.9" font-size="12.5" fill="#000" textLength="18.0" lengthAdjust="spacingAndGlyphs">21K</text>
<text x="231.9" y="201.2" font-size="12.5" fill="#000" textLength="16.4" lengthAdjust="spacingAndGlyphs">16x</text>
<text x="686.9" y="201.2" font-size="12.5" fill="#000" textLength="18.0" lengthAdjust="spacingAndGlyphs">24K</text>
<text x="231.9" y="169.4" font-size="12.5" fill="#000" textLength="16.4" lengthAdjust="spacingAndGlyphs">18x</text>
<text x="686.9" y="169.4" font-size="12.5" fill="#000" textLength="18.0" lengthAdjust="spacingAndGlyphs">27K</text>
<text x="231.9" y="137.7" font-size="12.5" fill="#000" textLength="16.4" lengthAdjust="spacingAndGlyphs">20x</text>
<text x="686.9" y="137.7" font-size="12.5" fill="#000" textLength="18.0" lengthAdjust="spacingAndGlyphs">30K</text>
<text x="231.9" y="105.9" font-size="12.5" fill="#000" textLength="16.4" lengthAdjust="spacingAndGlyphs">22x</text>
<text x="686.9" y="105.9" font-size="12.5" fill="#000" textLength="18.0" lengthAdjust="spacingAndGlyphs">33K</text>
<text x="231.9" y="74.1" font-size="12.5" fill="#000" textLength="16.4" lengthAdjust="spacingAndGlyphs">24x</text>
<text x="686.9" y="74.1" font-size="12.5" fill="#000" textLength="18.0" lengthAdjust="spacingAndGlyphs">36K</text>
<text x="232.7" y="632.0" font-size="12.5" fill="#000" textLength="13.5" lengthAdjust="spacingAndGlyphs">0%</text>
<text x="688.8" y="632.0" font-size="12.5" fill="#000" textLength="13.5" lengthAdjust="spacingAndGlyphs">0%</text>
<text x="229.7" y="600.6" font-size="12.5" fill="#000" textLength="19.5" lengthAdjust="spacingAndGlyphs">20%</text>
<text x="685.8" y="600.6" font-size="12.5" fill="#000" textLength="19.5" lengthAdjust="spacingAndGlyphs">20%</text>
<text x="229.7" y="569.2" font-size="12.5" fill="#000" textLength="19.5" lengthAdjust="spacingAndGlyphs">40%</text>
<text x="685.8" y="569.2" font-size="12.5" fill="#000" textLength="19.5" lengthAdjust="spacingAndGlyphs">40%</text>
<text x="229.7" y="537.9" font-size="12.5" fill="#000" textLength="19.5" lengthAdjust="spacingAndGlyphs">60%</text>
<text x="685.8" y="537.9" font-size="12.5" fill="#000" textLength="19.5" lengthAdjust="spacingAndGlyphs">60%</text>
<text x="229.7" y="506.5" font-size="12.5" fill="#000" textLength="19.5" lengthAdjust="spacingAndGlyphs">80%</text>
<text x="685.8" y="506.5" font-size="12.5" fill="#000" textLength="19.5" lengthAdjust="spacingAndGlyphs">80%</text>
<text x="248.9" y="463.7" font-size="12.5" fill="#000" textLength="5.2" lengthAdjust="spacingAndGlyphs">0</text>
<text x="334.6" y="463.7" font-size="12.5" fill="#000" textLength="26.0" lengthAdjust="spacingAndGlyphs">12GB</text>
<text x="430.6" y="463.7" font-size="12.5" fill="#000" textLength="26.0" lengthAdjust="spacingAndGlyphs">24GB</text>
<text x="526.6" y="463.7" font-size="12.5" fill="#000" textLength="26.0" lengthAdjust="spacingAndGlyphs">36GB</text>
<text x="622.6" y="463.7" font-size="12.5" fill="#000" textLength="26.0" lengthAdjust="spacingAndGlyphs">48GB</text>
</svg>
</body></html>
